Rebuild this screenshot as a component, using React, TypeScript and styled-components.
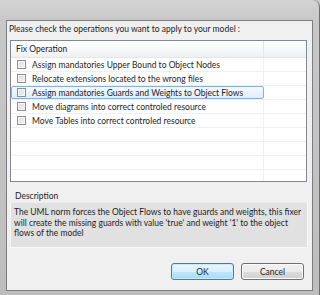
import * as React from 'react';
import styled, { createGlobalStyle } from 'styled-components';

const GlobalStyle = createGlobalStyle`
  html, body {
    margin: 0;
    padding: 0;
    background: #c9c9c9;
    overflow: hidden;
  }
`

const operations = [
  'Assign mandatories Upper Bound to Object Nodes',
  'Relocate extensions located to the wrong files',
  'Assign mandatories Guards and Weights to Object Flows',
  'Move diagrams into correct controled resource',
  'Move Tables into correct controled resource',
]

const EMPTY_ROWS = 4

const Frame = styled.div`
  width: 320px;
  height: 295px;
  box-sizing: border-box;
  padding: 20px 6px 4px 6px;
  background: linear-gradient(to bottom, #d4d4d4 0px, #c8c8c8 20px, #bdbdbd 100%);
  border-top-right-radius: 7px;
  border-right: 1px solid #6e6e6e;
  font-family: Lato, "Open Sans", sans-serif;
  font-size: 8.5px;
  color: #1e1e1e;
`

const Window = styled.div`
  height: 100%;
  box-sizing: border-box;
  background: #f0f0f0;
  border: 1px solid #7d7d7d;
  display: flex;
  flex-direction: column;
  padding: 0 5px 0 2px;
  & > * {
    flex: none;
  }
`

const Prompt = styled.div`
  height: 19px;
  line-height: 17px;
`

const Table = styled.div`
  margin-left: 1px;
  height: 142px;
  box-sizing: border-box;
  border: 1px solid #828790;
  background: #fff;
  display: flex;
  flex-direction: column;
  overflow: hidden;
  & > * {
    flex: none;
  }
`

const HeaderRow = styled.div`
  display: grid;
  grid-template-columns: 253px 1fr;
  height: 17px;
  box-sizing: border-box;
  background: linear-gradient(to bottom, #ffffff 0%, #f6f7f9 60%, #eff0f2 100%);
  border-bottom: 1px solid #e3e5e8;
`

const HeaderCell = styled.div`
  line-height: 16px;
  padding-left: 5px;
  border-right: 1px solid #e3e5e8;
  &:last-child {
    border-right: none;
  }
`

const Row = styled.div`
  display: grid;
  grid-template-columns: 253px 1fr;
  height: 14px;
  box-sizing: border-box;
  border-bottom: 1px solid #eff0f1;
`

const Cell = styled.div<{ $selected?: boolean }>`
  display: flex;
  align-items: center;
  gap: 6px;
  padding-left: 6px;
  border-right: 1px solid #eff0f1;
  box-sizing: border-box;
  white-space: nowrap;
  ${p => p.$selected && `
    background: linear-gradient(to bottom, #f4f9fe 0%, #e1edfc 100%);
    border: 1px solid #89aedc;
    border-radius: 2px;
    padding-left: 5px;
  `}
  &:last-child {
    border-right: none;
  }
`

const CheckBox = styled.span`
  width: 9px;
  height: 9px;
  box-sizing: border-box;
  border: 1px solid #8f8f8f;
  background: linear-gradient(135deg, #dcdcdc 0%, #f4f4f4 100%);
  box-shadow: inset 0 0 0 1px #f6f6f6;
  flex: none;
`

const DescLabel = styled.div`
  margin: 9px 0 0 6px;
  height: 11px;
  line-height: 11px;
`

const DescBox = styled.div`
  margin: 0 -1px 0 1px;
  height: 46px;
  box-sizing: border-box;
  background: #e1e1e1;
  border: 1px solid #f7f7f7;
  border-top-color: #ececec;
  padding: 4px 3px 0 3px;
  line-height: 10.5px;
`

const ButtonBar = styled.div`
  display: flex;
  justify-content: flex-end;
  gap: 7px;
  margin-top: 15px;
  padding-right: 3px;
`

const Button = styled.button<{ $primary?: boolean }>`
  width: 63px;
  height: 17px;
  box-sizing: border-box;
  padding: 0;
  font-family: inherit;
  font-size: 8.5px;
  color: #1e1e1e;
  border-radius: 3px;
  border: 1px solid ${p => (p.$primary ? '#3c7fb1' : '#707070')};
  background: ${p =>
    p.$primary
      ? 'linear-gradient(to bottom, #eaf6fd 0%, #d9f0fc 50%, #bee6fd 51%, #a7d9f5 100%)'
      : 'linear-gradient(to bottom, #f2f2f2 0%, #ebebeb 50%, #dddddd 51%, #cfcfcf 100%)'};
  box-shadow: inset 0 0 0 1px ${p => (p.$primary ? '#c7ecff' : '#fcfcfc')};
`

export default function App() {
  return (
    <>
      <GlobalStyle />
      <Frame>
        <Window>
          <Prompt>Please check the operations you want to apply to your model :</Prompt>
          <Table>
            <HeaderRow>
              <HeaderCell>Fix Operation</HeaderCell>
              <HeaderCell />
            </HeaderRow>
            {operations.map((op, i) => (
              <Row key={op}>
                <Cell $selected={i === 2}>
                  <CheckBox />
                  {op}
                </Cell>
                <Cell />
              </Row>
            ))}
            {Array.from({ length: EMPTY_ROWS }).map((_, i) => (
              <Row key={'e' + i}>
                <Cell />
                <Cell />
              </Row>
            ))}
          </Table>
          <DescLabel>Description</DescLabel>
          <DescBox>
            The UML norm forces the Object Flows to have guards and weights, this fixer will create the
            missing guards with value 'true' and weight '1' to the object flows of the model
          </DescBox>
          <ButtonBar>
            <Button $primary>OK</Button>
            <Button>Cancel</Button>
          </ButtonBar>
        </Window>
      </Frame>
    </>
  )
}
